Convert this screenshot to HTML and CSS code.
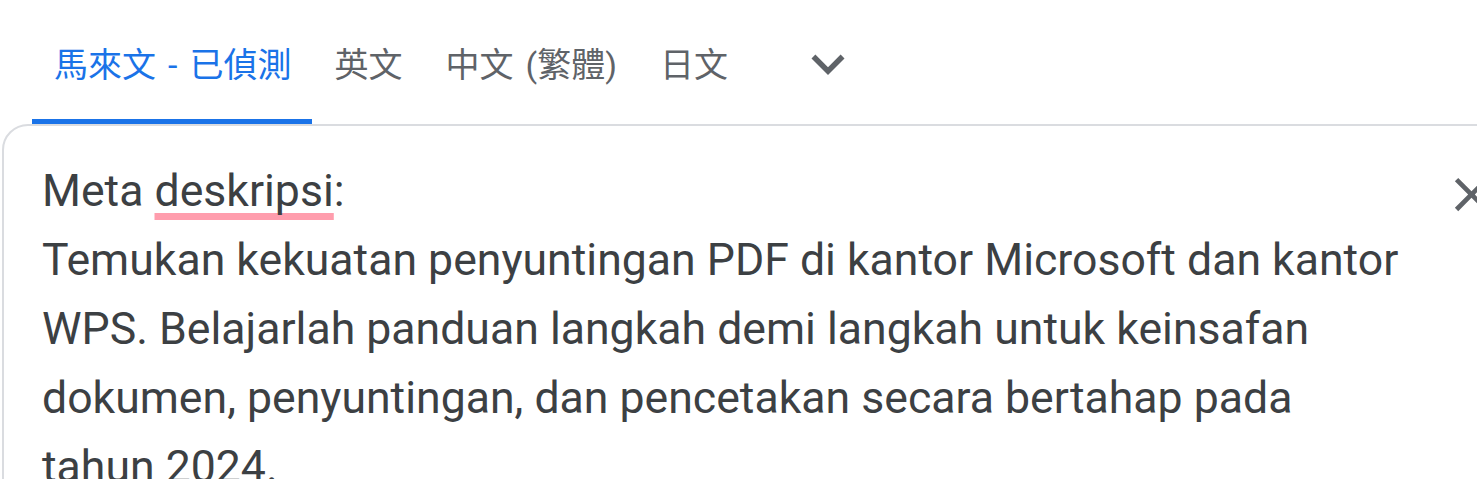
FILE: index.html
```html
<!DOCTYPE html>
<html lang="zh-Hant">
<head>
<meta charset="utf-8">
<title>Translate</title>
<link rel="stylesheet" href="styles.css">
</head>
<body>
<nav class="tabs">
  <div class="tab active">馬來文 - 已偵測</div>
  <div class="tab">英文</div>
  <div class="tab">中文 (繁體)</div>
  <div class="tab">日文</div>
  <button class="more" aria-label="更多語言">
    <svg viewBox="0 0 24 24" width="66" height="66"><path d="M16.59 8.59L12 13.17 7.41 8.59 6 10l6 6 6-6z"/></svg>
  </button>
</nav>
<section class="card">
  <div class="source" lang="ms">
    <p class="line">Meta <span class="spell">deskripsi</span>:</p>
    <p class="line">Temukan kekuatan penyuntingan PDF di kantor Microsoft dan kantor WPS. Belajarlah panduan langkah demi langkah untuk keinsafan dokumen, penyuntingan, dan pencetakan secara bertahap pada tahun 2024.</p>
  </div>
  <button class="clear" aria-label="清除">
    <svg viewBox="0 0 24 24" width="57" height="57"><path d="M19 6.41L17.59 5 12 10.59 6.41 5 5 6.41 10.59 12 5 17.59 6.41 19 12 13.41 17.59 19 19 17.59 13.41 12z"/></svg>
  </button>
</section>
</body>
</html>
```
FILE: styles.css
```css
html, body {
  margin: 0;
  padding: 0;
  background: #ffffff;
  overflow: hidden;
}
body {
  font-family: Roboto, "Noto Sans CJK TC", sans-serif;
  width: 1477px;
  height: 479px;
}
.tabs {
  display: flex;
  align-items: stretch;
  height: 124px;
  padding-left: 32px;
  box-sizing: border-box;
}
.tab {
  display: flex;
  align-items: center;
  padding: 5px 21px 0 22px;
  border-bottom: 5px solid transparent;
  font-size: 34px;
  word-spacing: 3.6px;
  color: #5f6368;
  white-space: nowrap;
}
.tab.active {
  color: #1a73e8;
  border-bottom-color: #1a73e8;
}
.more {
  display: flex;
  align-items: center;
  justify-content: center;
  margin-left: 46px;
  padding: 0;
  border: 0;
  background: none;
  fill: #5f6368;
  align-self: flex-start;
  margin-top: 31px;
}
.more svg, .clear svg {
  display: block;
}
.card {
  display: flex;
  align-items: flex-start;
  width: 1560px;
  margin-left: 2px;
  height: 400px;
  border: 2px solid #dadce0;
  border-radius: 26px;
  padding: 31px 0 0 38px;
  box-sizing: border-box;
}
.source {
  width: 1366px;
  flex: none;
  font-size: 44.6px;
  line-height: 69px;
  color: #3c4043;
}
.line {
  margin: 0;
}
.spell {
  text-decoration: underline;
  text-decoration-color: #ff9dad;
  text-decoration-thickness: 7px;
  text-underline-offset: 7px;
  text-decoration-skip-ink: none;
}
.clear {
  flex: none;
  margin-left: 35px;
  margin-top: 9px;
  padding: 0;
  border: 0;
  background: none;
  fill: #5f6368;
}
```
